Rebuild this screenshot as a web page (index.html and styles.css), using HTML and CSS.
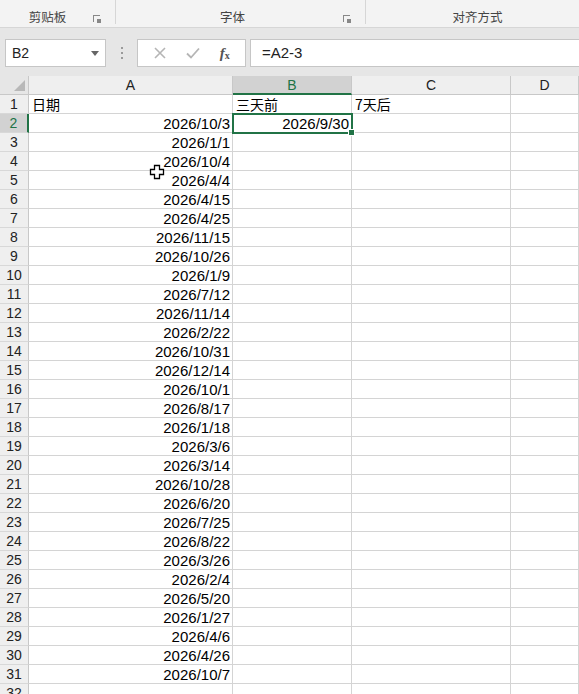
FILE: index.html
```html
<!DOCTYPE html>
<html lang="zh">
<head>
<meta charset="utf-8">
<link rel="stylesheet" href="styles.css">
</head>
<body>
<div class="ribbon">
  <div class="group g1"><span class="glabel">剪贴板</span><span class="launcher"></span></div>
  <div class="group g2"><span class="glabel">字体</span><span class="launcher"></span></div>
  <div class="group g3"><span class="glabel">对齐方式</span></div>
</div>
<div class="fbar">
  <div class="namebox"><span>B2</span><span class="caret"></span></div>
  <div class="dots"><i></i><i></i><i></i></div>
  <div class="fbtns">
    <svg width="14" height="14" viewBox="0 0 14 14"><path d="M2 2L12 12M12 2L2 12" stroke="#b5b5b5" stroke-width="1.6"/></svg>
    <svg width="16" height="14" viewBox="0 0 16 14"><path d="M2 7.5L6 11.5L14 2.5" stroke="#b5b5b5" stroke-width="1.8" fill="none"/></svg>
    <span class="fx"><i>f</i><sub>x</sub></span>
  </div>
  <div class="finput">=A2-3</div>
</div>
<div class="sheet" id="sheet"></div>
<svg class="cursor" width="16" height="16" viewBox="0 0 16 16"><path d="M5.5 1.5H10.5V5.5H14.5V10.5H10.5V14.5H5.5V10.5H1.5V5.5H5.5Z" fill="#fff" stroke="#000" stroke-width="1.3"/></svg>
<script src="app.js"></script>
</body>
</html>
```
FILE: app.js
```js
const dates=["2026/10/3","2026/1/1","2026/10/4","2026/4/4","2026/4/15","2026/4/25","2026/11/15","2026/10/26","2026/1/9","2026/7/12","2026/11/14","2026/2/22","2026/10/31","2026/12/14","2026/10/1","2026/8/17","2026/1/18","2026/3/6","2026/3/14","2026/10/28","2026/6/20","2026/7/25","2026/8/22","2026/3/26","2026/2/4","2026/5/20","2026/1/27","2026/4/6","2026/4/26","2026/10/7"];
const s=document.getElementById('sheet');
let h='<div class="corner"><span class="tri"></span></div><div class="ch">A</div><div class="ch sel">B</div><div class="ch">C</div><div class="ch">D</div>';
for(let r=1;r<=32;r++){
  let a='',b='',c='',cls='';
  if(r===1){a='日期';b='三天前';c='7天后';cls=' txt';}
  else if(r<=31){a=dates[r-2];}
  if(r===2){b='2026/9/30';}
  h+=`<div class="rh${r===2?' sel':''}">${r}</div>`;
  h+=`<div class="cell${cls}">${a}</div>`;
  h+=`<div class="cell${cls}${r===2?' active':''}">${b}${r===2?'<span class="handle"></span>':''}</div>`;
  h+=`<div class="cell${cls}">${c}</div>`;
  h+=`<div class="cell"></div>`;
}
s.innerHTML=h;
```
FILE: styles.css
```css
html,body{margin:0;padding:0;}
body{width:579px;height:694px;overflow:hidden;background:#fff;font-family:"Liberation Sans","Noto Sans CJK SC",sans-serif;color:#000;position:relative;}
.ribbon{height:27px;background:#f3f3f3;border-bottom:1px solid #d6d6d6;display:flex;}
.group{position:relative;display:flex;justify-content:center;align-items:flex-end;height:24px;box-sizing:border-box;font-family:"Noto Sans CJK SC",sans-serif;font-size:12.5px;color:#444;}
.g1{width:116px;border-right:1px solid #d6d6d6;}
.g2{width:250px;border-right:1px solid #d6d6d6;}
.g3{flex:1;}
.glabel{line-height:14px;}
.g1 .glabel{padding-right:20px;}
.g2 .glabel{padding-right:16px;}
.g3 .glabel{padding-left:10px;}
.launcher{position:absolute;right:15px;bottom:2px;width:6px;height:6px;border-left:1px solid #888;border-top:1px solid #888;}
.launcher::after{content:"";position:absolute;right:-1px;bottom:-1px;width:4px;height:4px;background:#888;}
.fbar{height:48px;background:#e6e6e6;display:flex;align-items:flex-start;padding-top:11px;box-sizing:border-box;}
.namebox{margin-left:5px;width:101px;height:28px;box-sizing:border-box;background:#fff;border:1px solid #c6c6c6;display:flex;align-items:center;justify-content:space-between;padding:0 6px 0 6px;font-size:14px;color:#222;}
.caret{width:0;height:0;border-left:4px solid transparent;border-right:4px solid transparent;border-top:5px solid #666;}
.dots{width:31px;height:28px;display:flex;flex-direction:column;align-items:center;justify-content:center;gap:3px;}
.dots i{width:2px;height:2px;background:#9a9a9a;display:block;}
.fbtns{width:109px;height:28px;box-sizing:border-box;background:#fff;border:1px solid #c6c6c6;display:flex;align-items:center;justify-content:space-around;padding:0 6px 0 6px;}
.fx{font-family:"Liberation Serif",serif;font-size:15px;color:#555;font-weight:bold;}
.fx sub{font-size:10px;vertical-align:-1px;}
.finput{margin-left:4px;flex:1;height:28px;box-sizing:border-box;background:#fff;border:1px solid #c6c6c6;border-right:none;font-size:15px;line-height:26px;padding-left:11px;color:#222;}
.sheet{display:grid;grid-template-columns:29px 204px 119px 159px 68px;grid-template-rows:19px;grid-auto-rows:19px;margin-top:0;}
.corner{background:#e6e6e6;border-right:1px solid #c8c8c8;border-bottom:1px solid #c8c8c8;box-sizing:border-box;position:relative;}
.tri{position:absolute;right:3px;bottom:3px;width:0;height:0;border-left:11px solid transparent;border-bottom:11px solid #b8b8b8;}
.ch{background:#efefef;border-right:1px solid #c8c8c8;border-bottom:1px solid #c8c8c8;box-sizing:border-box;text-align:center;font-size:14px;line-height:19px;color:#222;}
.ch.sel{background:#d2d2d2;color:#217346;border-bottom:2px solid #217346;}
.rh{background:#efefef;border-right:1px solid #c8c8c8;border-bottom:1px solid #d8d8d8;box-sizing:border-box;text-align:center;font-size:14px;line-height:18px;color:#222;}
.rh.sel{background:#d2d2d2;color:#217346;border-right:2px solid #217346;}
.cell{border-right:1px solid #d4d4d4;border-bottom:1px solid #d4d4d4;box-sizing:border-box;text-align:right;font-size:15px;line-height:19px;padding-right:2px;white-space:nowrap;overflow:visible;position:relative;}
.cell.txt{text-align:left;padding-left:3px;font-family:"Noto Sans CJK SC",sans-serif;font-size:14px;line-height:19px;}
.cell.active{outline:2px solid #217346;outline-offset:-1px;z-index:2;}
.handle{position:absolute;right:-4px;bottom:-4px;width:5px;height:5px;background:#217346;border:1px solid #fff;}
.cursor{position:absolute;left:149px;top:164px;}
```
